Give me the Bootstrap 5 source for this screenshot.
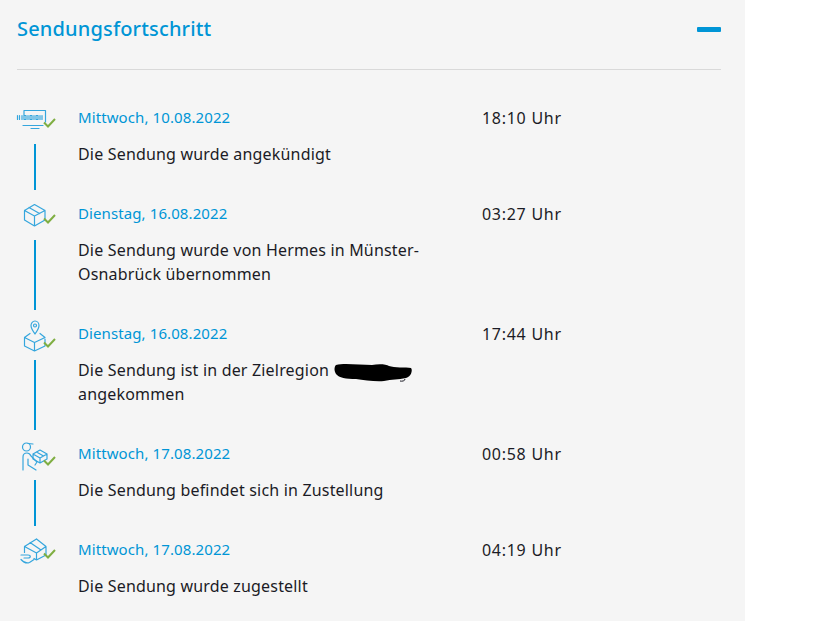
<!DOCTYPE html>
<html lang="de">
<head>
    <meta charset="utf-8">
    <meta name="viewport" content="width=device-width, initial-scale=1">
    <title>Sendungsfortschritt</title>
    <link href="https://cdn.jsdelivr.net/npm/bootstrap@5.3.3/dist/css/bootstrap.min.css" rel="stylesheet">
    <style>
        body {
            background: #fff;
            font-family: "Noto Sans", sans-serif;
            font-size: 16px;
            line-height: 24px;
            letter-spacing: .18px;
            color: #1b1b25;
        }
        .panel {
            width: 745px;
            min-height: 621px;
            background: #f5f5f5;
            padding: 0 24px 0 17px;
        }
        .panel-head {
            height: 70px;
            padding-top: 15px;
            border-bottom: 1px solid #d9d9d9;
        }
        .panel-title {
            font-size: 20px;
            line-height: 28px;
            letter-spacing: .16px;
            color: #0095d6;
            margin: 0;
        }
        .minus-bar {
            width: 24px;
            height: 5px;
            margin-top: 12px;
            border-radius: 1px;
            background: #0095d6;
        }
        .steps {
            padding-top: 35px;
        }
        .icon-col {
            width: 61px;
            flex-shrink: 0;
        }
        .icon-col svg {
            display: block;
            margin-left: -3px;
            overflow: visible;
        }
        .connector {
            flex-grow: 1;
            width: 2px;
            margin: 0 0 11px 17px;
            background: #0095d6;
        }
        .step-head {
            height: 24px;
        }
        .step-date {
            width: 404px;
            font-size: 15px;
            letter-spacing: .1px;
            color: #0095d6;
        }
        .step-time {
            padding-top: 1px;
            letter-spacing: .72px;
        }
        .step-text {
            margin-top: 13px;
            padding-bottom: 35px;
        }
        .blot {
            display: inline-block;
            width: 78px;
            height: 18px;
            margin: 0 0 -2px 5px;
            overflow: visible;
        }
        .ic {
            fill: none;
            stroke: #35a6dd;
            stroke-width: 1.2;
            stroke-linejoin: round;
            stroke-linecap: round;
        }
        .ok {
            fill: none;
            stroke: #7fae42;
            stroke-width: 2;
        }
    </style>
</head>
<body>
    <div class="panel">
        <div class="panel-head d-flex justify-content-between align-items-start">
            <h2 class="panel-title">Sendungsfortschritt</h2>
            <div class="minus-bar"></div>
        </div>

        <div class="steps">
            <div class="d-flex">
                <div class="icon-col d-flex flex-column">
                    <svg width="44" height="39" viewBox="0 0 44 39">
                        <path class="ic" d="M10 10V5.500H31.500V17M9 20.500H29M17 23.500H25"/>
                        <path class="ic" d="M3.500 10.500V14.500M5.500 10.500V14.500M8 10.500V14.500M10 10.500H12V14.500H10ZM14 10.500V14.500M16 10.500H18V14.500H16ZM20 10.500V14.500M22 10.500H24V14.500H22ZM26 10.500V14.500M28 10.500V14.500"/>
                        <path class="ok" d="M30 17.500L34 21.500L41 14"/>
                    </svg>
                    <div class="connector"></div>
                </div>
                <div class="flex-grow-1">
                    <div class="step-head d-flex">
                        <div class="step-date">Mittwoch, 10.08.2022</div>
                        <div class="step-time">18:10 Uhr</div>
                    </div>
                    <div class="step-text">Die Sendung wurde angekündigt</div>
                </div>
            </div>

            <div class="d-flex">
                <div class="icon-col d-flex flex-column">
                    <svg width="44" height="39" viewBox="0 0 44 39">
                        <path class="ic" d="M20.500 3.500L31 9.500V19L20.500 25L10.500 19V9.500ZM10.500 9.500L20.500 15L31 9.500M20.500 15V25M15 6.500L25.500 12.500"/>
                        <path class="ok" d="M30 17.500L34 21.500L41 14"/>
                    </svg>
                    <div class="connector"></div>
                </div>
                <div class="flex-grow-1">
                    <div class="step-head d-flex">
                        <div class="step-date">Dienstag, 16.08.2022</div>
                        <div class="step-time">03:27 Uhr</div>
                    </div>
                    <div class="step-text">Die Sendung wurde von Hermes in Münster-<br>Osnabrück übernommen</div>
                </div>
            </div>

            <div class="d-flex">
                <div class="icon-col d-flex flex-column">
                    <svg width="44" height="39" viewBox="0 0 44 39">
                        <path class="ic" d="M21 13C18.500 9.500 17 7.500 17 4.500C17 2 18.800 0 21 0C23.200 0 25 2 25 4.500C25 7.500 23.500 9.500 21 13Z"/>
                        <circle class="ic" cx="21" cy="4.500" r="1.500"/>
                        <path class="ic" d="M16 12.500L10.500 16.500V25L20.500 30L31 25V18M10.500 16.500L20.500 21.500L31 16.500L26 12.500M20.500 21.500V30"/>
                        <path class="ok" d="M30 21.500L34 25.500L41 18"/>
                    </svg>
                    <div class="connector"></div>
                </div>
                <div class="flex-grow-1">
                    <div class="step-head d-flex">
                        <div class="step-date">Dienstag, 16.08.2022</div>
                        <div class="step-time">17:44 Uhr</div>
                    </div>
                    <div class="step-text">Die Sendung ist in der Zielregion<svg class="blot" viewBox="0 0 78 18"><path fill="none" stroke="#1b1b25" d="M71 15C71 17 68 17.500 66 17"/><path fill="#000" d="M2 1C10 -1 26 1 38 1C44 0 52 0 55 2C60 4 72 3 77 4C79 6 77 13 72 14C64 16 58 15 50 17C42 18 30 16 22 15C12 15 5 14 2 10C0 7 0 3 2 1Z"/></svg><br>angekommen</div>
                </div>
            </div>

            <div class="d-flex">
                <div class="icon-col d-flex flex-column">
                    <svg width="44" height="39" viewBox="0 0 44 39">
                        <circle class="ic" cx="12.500" cy="6" r="4"/>
                        <path class="ic" d="M14 2.500L19 3M9 29V16C9 13 11 12 13 12C15 12 16 13 17 15L23 21L21 24M14 18V24L22 29"/>
                        <path class="ic" d="M19 13L26 9L33 13V18L26 22L19 18ZM19 13L26 17L33 13M26 17V22M22.500 11L29.500 15"/>
                        <path class="ok" d="M30 19.500L34 23.500L41 16"/>
                    </svg>
                    <div class="connector"></div>
                </div>
                <div class="flex-grow-1">
                    <div class="step-head d-flex">
                        <div class="step-date">Mittwoch, 17.08.2022</div>
                        <div class="step-time">00:58 Uhr</div>
                    </div>
                    <div class="step-text">Die Sendung befindet sich in Zustellung</div>
                </div>
            </div>

            <div class="d-flex">
                <div class="icon-col d-flex flex-column">
                    <svg width="44" height="39" viewBox="0 0 44 39">
                        <path class="ic" d="M22.500 2L32 9.500V18L22.500 23L20 21.500M10.500 15.500V9.500L22.500 2M10.500 9.500L22.500 16L32 9.500M22.500 16V23M16 5.500L27 13"/>
                        <path class="ic" d="M7 18H14C17 18 17 21 14 21H10M7 22.500C10 26 13 26.500 15.500 25.500L20 22.500"/>
                        <path class="ok" d="M30 16.500L34 20.500L41 13"/>
                    </svg>
                </div>
                <div class="flex-grow-1">
                    <div class="step-head d-flex">
                        <div class="step-date">Mittwoch, 17.08.2022</div>
                        <div class="step-time">04:19 Uhr</div>
                    </div>
                    <div class="step-text">Die Sendung wurde zugestellt</div>
                </div>
            </div>
        </div>
    </div>
    <script src="https://cdn.jsdelivr.net/npm/bootstrap@5.3.3/dist/js/bootstrap.bundle.min.js"></script>
</body>
</html>
